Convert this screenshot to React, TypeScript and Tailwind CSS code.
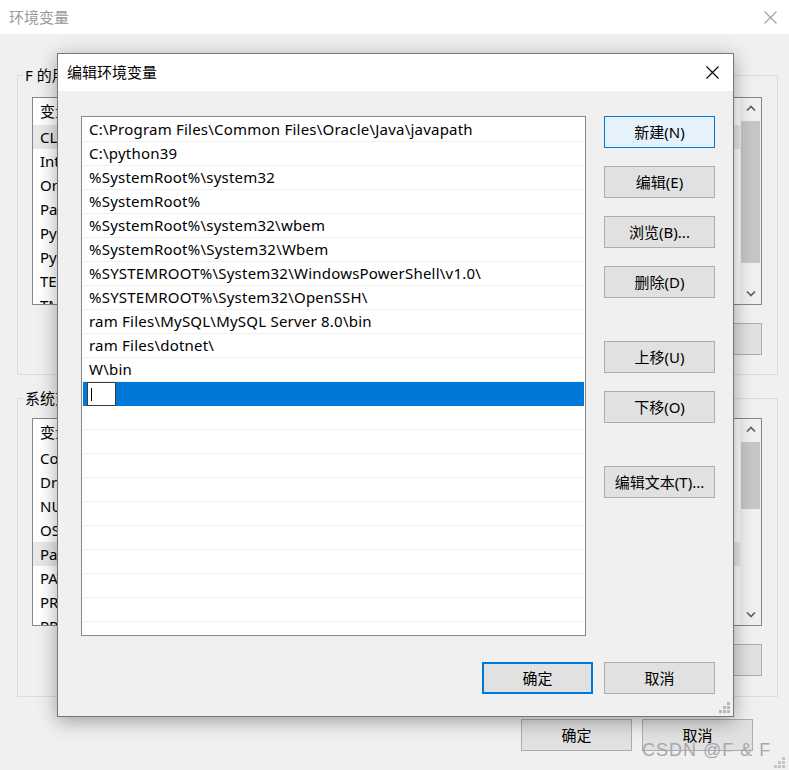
import React from "react";

const font = "font-['Noto_Sans','Noto_Sans_CJK_SC',sans-serif]";

const paths = [
  "C:\\Program Files\\Common Files\\Oracle\\Java\\javapath",
  "C:\\python39",
  "%SystemRoot%\\system32",
  "%SystemRoot%",
  "%SystemRoot%\\system32\\wbem",
  "%SystemRoot%\\System32\\Wbem",
  "%SYSTEMROOT%\\System32\\WindowsPowerShell\\v1.0\\",
  "%SYSTEMROOT%\\System32\\OpenSSH\\",
  "ram Files\\MySQL\\MySQL Server 8.0\\bin",
  "ram Files\\dotnet\\",
  "W\\bin",
];

const userVars = [
  ["CLASSPATH", ".;%JAVA_HOME%\\lib"],
  ["IntelliJ IDEA", "C:\\Program Files\\JetBrains\\IntelliJ IDEA\\bin;"],
  ["OneDrive", "C:\\Users\\F\\OneDrive"],
  ["Path", "C:\\Users\\F\\AppData\\Local\\Microsoft\\WindowsApps;"],
  ["PyCharm", "C:\\Program Files\\JetBrains\\PyCharm\\bin;"],
  ["PyCharm Community Edition", "C:\\Program Files\\JetBrains\\PyCharm Community Edition\\bin;"],
  ["TEMP", "%USERPROFILE%\\AppData\\Local\\Temp"],
  ["TMP", "%USERPROFILE%\\AppData\\Local\\Temp"],
];

const sysVars = [
  ["ComSpec", "C:\\Windows\\system32\\cmd.exe"],
  ["DriverData", "C:\\Windows\\System32\\Drivers\\DriverData"],
  ["NUMBER_OF_PROCESSORS", "8"],
  ["OS", "Windows_NT"],
  ["Path", "C:\\Program Files\\Common Files\\Oracle\\Java\\javapath;"],
  ["PATHEXT", ".COM;.EXE;.BAT;.CMD;.VBS;.VBE;.JS;.JSE;.WSF;.WSH;.MSC"],
  ["PROCESSOR_ARCHITECTURE", "AMD64"],
  ["PROCESSOR_IDENTIFIER", "Intel64 Family 6 Model 142"],
];

const Btn = ({
  children,
  className = "",
  primary = false,
  focused = false,
}: {
  children: React.ReactNode;
  className?: string;
  primary?: boolean;
  focused?: boolean;
}) => (
  <button
    className={
      "w-[111px] h-[32px] flex items-center justify-center text-[15px] text-black shrink-0 " +
      (focused
        ? "bg-[#e5f1fb] border border-[#0078d7] "
        : primary
        ? "bg-[#e1e1e1] border-2 border-[#0078d7] "
        : "bg-[#e1e1e1] border border-[#adadad] ") +
      className
    }
  >
    {children}
  </button>
);

const CloseX = ({ color }: { color: string }) => (
  <svg width="13" height="13" viewBox="0 0 13 13">
    <path d="M0.5 0.5 L12.5 12.5 M12.5 0.5 L0.5 12.5" stroke={color} strokeWidth="1.1" />
  </svg>
);

const Grip = ({ color }: { color: string }) => (
  <svg width="11" height="11" viewBox="0 0 11 11">
    <g fill={color}>
      <rect x="8" y="0" width="3" height="3" />
      <rect x="4" y="4" width="3" height="3" />
      <rect x="8" y="4" width="3" height="3" />
      <rect x="0" y="8" width="3" height="3" />
      <rect x="4" y="8" width="3" height="3" />
      <rect x="8" y="8" width="3" height="3" />
    </g>
  </svg>
);

const Chevron = ({ up }: { up?: boolean }) => (
  <svg width="10" height="6" viewBox="0 0 10 6">
    <path d={up ? "M1 5.5 L5 1.5 L9 5.5" : "M1 0.5 L5 4.5 L9 0.5"} stroke="#606060" strokeWidth="1.6" fill="none" />
  </svg>
);

const VarList = ({
  rows,
  hi,
  thumbTop,
  thumbH,
}: {
  rows: string[][];
  hi: number;
  thumbTop: number;
  thumbH: number;
}) => (
  <div className="h-[208px] bg-white border border-[#828790] flex overflow-hidden">
    <div className="flex-1 flex flex-col overflow-hidden">
      <div className="h-[27px] shrink-0 flex items-center text-[15px] text-black">
        <div className="w-[210px] pl-[7px] border-r border-[#e5e5e5]">变量</div>
        <div className="pl-[7px]">值</div>
      </div>
      {rows.map((r, i) => (
        <div
          key={i}
          className={
            "h-[24px] shrink-0 flex items-center text-[15px] text-black " +
            (i === hi ? "bg-[#e8e8e8]" : "")
          }
        >
          <div className="w-[210px] pl-[7px] whitespace-nowrap overflow-hidden">{r[0]}</div>
          <div className="pl-[7px] whitespace-nowrap overflow-hidden">{r[1]}</div>
        </div>
      ))}
    </div>
    <div className="w-[21px] shrink-0 bg-[#f0f0f0] flex flex-col items-center">
      <div className="h-[20px] w-full flex items-center justify-center shrink-0">
        <Chevron up />
      </div>
      <div className="relative flex-1 w-full">
        <div
          className="absolute left-[1px] right-[1px] bg-[#c6c6c6]"
          style={{ top: thumbTop, height: thumbH }}
        />
      </div>
      <div className="h-[20px] w-full flex items-center justify-center shrink-0">
        <Chevron />
      </div>
    </div>
  </div>
);

export default function App() {
  return (
    <div className={"relative w-[789px] h-[770px] bg-[#f0f0f0] overflow-hidden " + font}>
      {/* background window */}
      <div className="h-[34px] bg-white flex items-center justify-between pl-[9px] pr-[12px]">
        <span className="text-[15px] text-[#9a9a9a]">环境变量</span>
        <CloseX color="#a0a0a0" />
      </div>

      <fieldset className="ml-[17px] mr-[11px] mt-[31px] border border-[#dcdcdc] pl-[14px] pr-[15px] pb-[19px]">
        <legend className="-ml-[9px] px-[2px] h-[20px] leading-[20px] text-[15px] text-black">
          F 的用户变量(U)
        </legend>
        <div className="mt-[12px]">
          <VarList rows={userVars} hi={0} thumbTop={3} thumbH={142} />
        </div>
        <div className="mt-[18px] flex justify-end gap-[10px]">
          <Btn className="w-[100px]">新建(N)...</Btn>
          <Btn className="w-[100px]">编辑(E)...</Btn>
          <Btn className="w-[100px]">删除(D)</Btn>
        </div>
      </fieldset>

      <fieldset className="ml-[17px] mr-[11px] mt-[13px] border border-[#dcdcdc] pl-[14px] pr-[15px] pb-[20px]">
        <legend className="-ml-[9px] px-[2px] h-[20px] leading-[20px] text-[15px] text-black">
          系统变量(S)
        </legend>
        <div className="mt-[10px]">
          <VarList rows={sysVars} hi={4} thumbTop={3} thumbH={67} />
        </div>
        <div className="mt-[18px] flex justify-end gap-[10px]">
          <Btn className="w-[100px]">新建(W)...</Btn>
          <Btn className="w-[100px]">编辑(I)...</Btn>
          <Btn className="w-[100px]">删除(L)</Btn>
        </div>
      </fieldset>

      <div className="mt-[22px] mr-[36px] flex justify-end gap-[10px]">
        <Btn>确定</Btn>
        <Btn>取消</Btn>
      </div>

      <div className="absolute right-[4px] bottom-[2px]">
        <Grip color="#c4c4c4" />
      </div>

      <div className="absolute left-[642px] top-[737px] text-[18px] tracking-[1px] text-[#a8a8a8] font-['Liberation_Sans',sans-serif] whitespace-nowrap">
        CSDN @F &amp; F
      </div>

      {/* dialog */}
      <div className="absolute left-[57px] top-[53px] w-[677px] h-[664px] border border-[#777777] bg-[#f0f0f0] shadow-[0_4px_18px_rgba(0,0,0,0.35)] flex flex-col">
        <div className="h-[37px] bg-white flex items-center justify-between pl-[9px] pr-[14px] shrink-0">
          <span className="text-[15px] text-black">编辑环境变量</span>
          <CloseX color="#000000" />
        </div>

        <div className="flex pl-[23px] pt-[25px]">
          <div className="w-[505px] h-[520px] bg-white border border-[#828790] pt-[1px] overflow-hidden">
            {paths.map((p, i) => (
              <div
                key={i}
                className="h-[24px] mx-[1px] border-b border-[#f0f0f0] flex items-center pl-[6px] text-[15px] tracking-[0.22px] text-black whitespace-nowrap"
              >
                {p}
              </div>
            ))}
            <div className="h-[24px] mx-[1px] bg-[#0078d7] flex items-center pl-[4px]">
              <div className="w-[29px] h-[24px] bg-white border border-[#3c3c3c] flex items-center pl-[3px]">
                <div className="w-[1px] h-[13px] bg-black" />
              </div>
            </div>
            {Array.from({ length: 10 }).map((_, i) => (
              <div key={i} className="h-[24px] mx-[1px] border-b border-[#f0f0f0]" />
            ))}
          </div>

          <div className="ml-[18px] flex flex-col">
            <Btn focused>新建(N)</Btn>
            <Btn className="mt-[18px]">编辑(E)</Btn>
            <Btn className="mt-[18px]">浏览(B)...</Btn>
            <Btn className="mt-[18px]">删除(D)</Btn>
            <Btn className="mt-[43px]">上移(U)</Btn>
            <Btn className="mt-[18px]">下移(O)</Btn>
            <Btn className="mt-[43px]">编辑文本(T)...</Btn>
          </div>
        </div>

        <div className="mt-[26px] pr-[18px] flex justify-end gap-[11px]">
          <Btn primary>确定</Btn>
          <Btn>取消</Btn>
        </div>

        <div className="absolute right-[3px] bottom-[3px]">
          <Grip color="#b8b8b8" />
        </div>
      </div>
    </div>
  );
}
